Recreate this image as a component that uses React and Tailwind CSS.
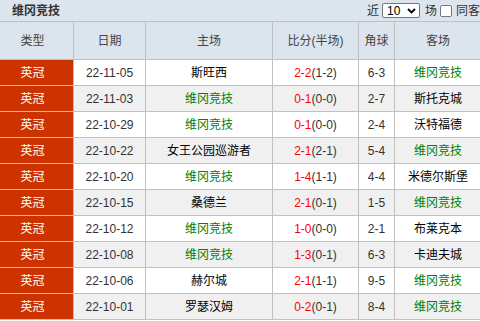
import React from "react";

const rows = [
  ["22-11-05", "斯旺西", false, "2-2", "(1-2)", "6-3", "维冈竞技", true],
  ["22-11-03", "维冈竞技", true, "0-1", "(0-0)", "2-7", "斯托克城", false],
  ["22-10-29", "维冈竞技", true, "0-1", "(0-0)", "2-4", "沃特福德", false],
  ["22-10-22", "女王公园巡游者", false, "2-1", "(2-1)", "5-4", "维冈竞技", true],
  ["22-10-20", "维冈竞技", true, "1-4", "(1-1)", "4-4", "米德尔斯堡", false],
  ["22-10-15", "桑德兰", false, "2-1", "(0-1)", "1-5", "维冈竞技", true],
  ["22-10-12", "维冈竞技", true, "1-0", "(0-0)", "2-1", "布莱克本", false],
  ["22-10-08", "维冈竞技", true, "1-3", "(0-1)", "6-3", "卡迪夫城", false],
  ["22-10-06", "赫尔城", false, "2-1", "(1-1)", "9-5", "维冈竞技", true],
  ["22-10-01", "罗瑟汉姆", false, "0-2", "(0-1)", "8-4", "维冈竞技", true],
];

const font = { fontFamily: '"Liberation Sans", "Noto Sans CJK SC", sans-serif' };

export default function App() {
  return (
    <div className="w-[480px] h-[321px] overflow-hidden bg-white text-[12px] text-[#333]" style={font}>
      <div className="h-[22px] bg-[#dce4ee] border-b border-[#c0c0c0] flex items-center justify-between pl-[12px] pr-0">
        <span className="font-bold text-[12px] text-[#333] leading-none">维冈竞技</span>
        <div className="flex items-center h-full whitespace-nowrap">
          <span className="mr-[3px] text-[#333]">近</span>
          <div className="w-[38px] h-[15px] bg-white border border-[#777] rounded-[2px] flex items-center justify-between pl-[4px] pr-[3px] text-[12px] text-black leading-none">
            <span>10</span>
            <svg width="9" height="6" viewBox="0 0 9 6"><path d="M1 1 L4.5 4.5 L8 1" fill="none" stroke="#000" strokeWidth="1.8" /></svg>
          </div>
          <span className="ml-[5px] text-[#333]">场</span>
          <div className="ml-[3px] w-[12px] h-[12px] bg-white border border-[#777] rounded-[2px]"></div>
          <span className="ml-[4px] text-[#333]">同客</span>
        </div>
      </div>
      <div className="grid grid-cols-[74px_72px_127px_86px_36px_86px] w-[481px]">
        {["类型", "日期", "主场", "比分(半场)", "角球", "客场"].map((h, i) => (
          <div key={h} className={`h-[38px] bg-[#dce4ee] border-b border-[#c0c0c0] flex items-center justify-center text-[#444] ${i < 5 ? "border-r" : ""} ${i === 0 ? "pr-[8px]" : ""}`}>
            {h}
          </div>
        ))}
        {rows.map((r, idx) => {
          const bg = idx % 2 === 0 ? "bg-white" : "bg-[#f0f0f0]";
          const cell = `h-[26px] border-b border-[#c0c0c0] flex items-center justify-center ${bg}`;
          return (
            <React.Fragment key={idx}>
              <div className="h-[26px] border-b border-r border-[#c0c0c0] bg-[#cc3300] text-white flex items-center justify-center pr-[8px]">英冠</div>
              <div className={`${cell} border-r text-[#333]`}>{r[0]}</div>
              <div className={`${cell} border-r ${r[2] ? "text-[#008000]" : "text-black"}`}>{r[1]}</div>
              <div className={`${cell} border-r`}>
                <span className="text-[#ff0000]">{r[3]}</span>
                <span className="text-[#333]">{r[4]}</span>
              </div>
              <div className={`${cell} border-r text-[#333]`}>{r[5]}</div>
              <div className={`${cell} ${r[7] ? "text-[#008000]" : "text-black"}`}>{r[6]}</div>
            </React.Fragment>
          );
        })}
      </div>
    </div>
  );
}
